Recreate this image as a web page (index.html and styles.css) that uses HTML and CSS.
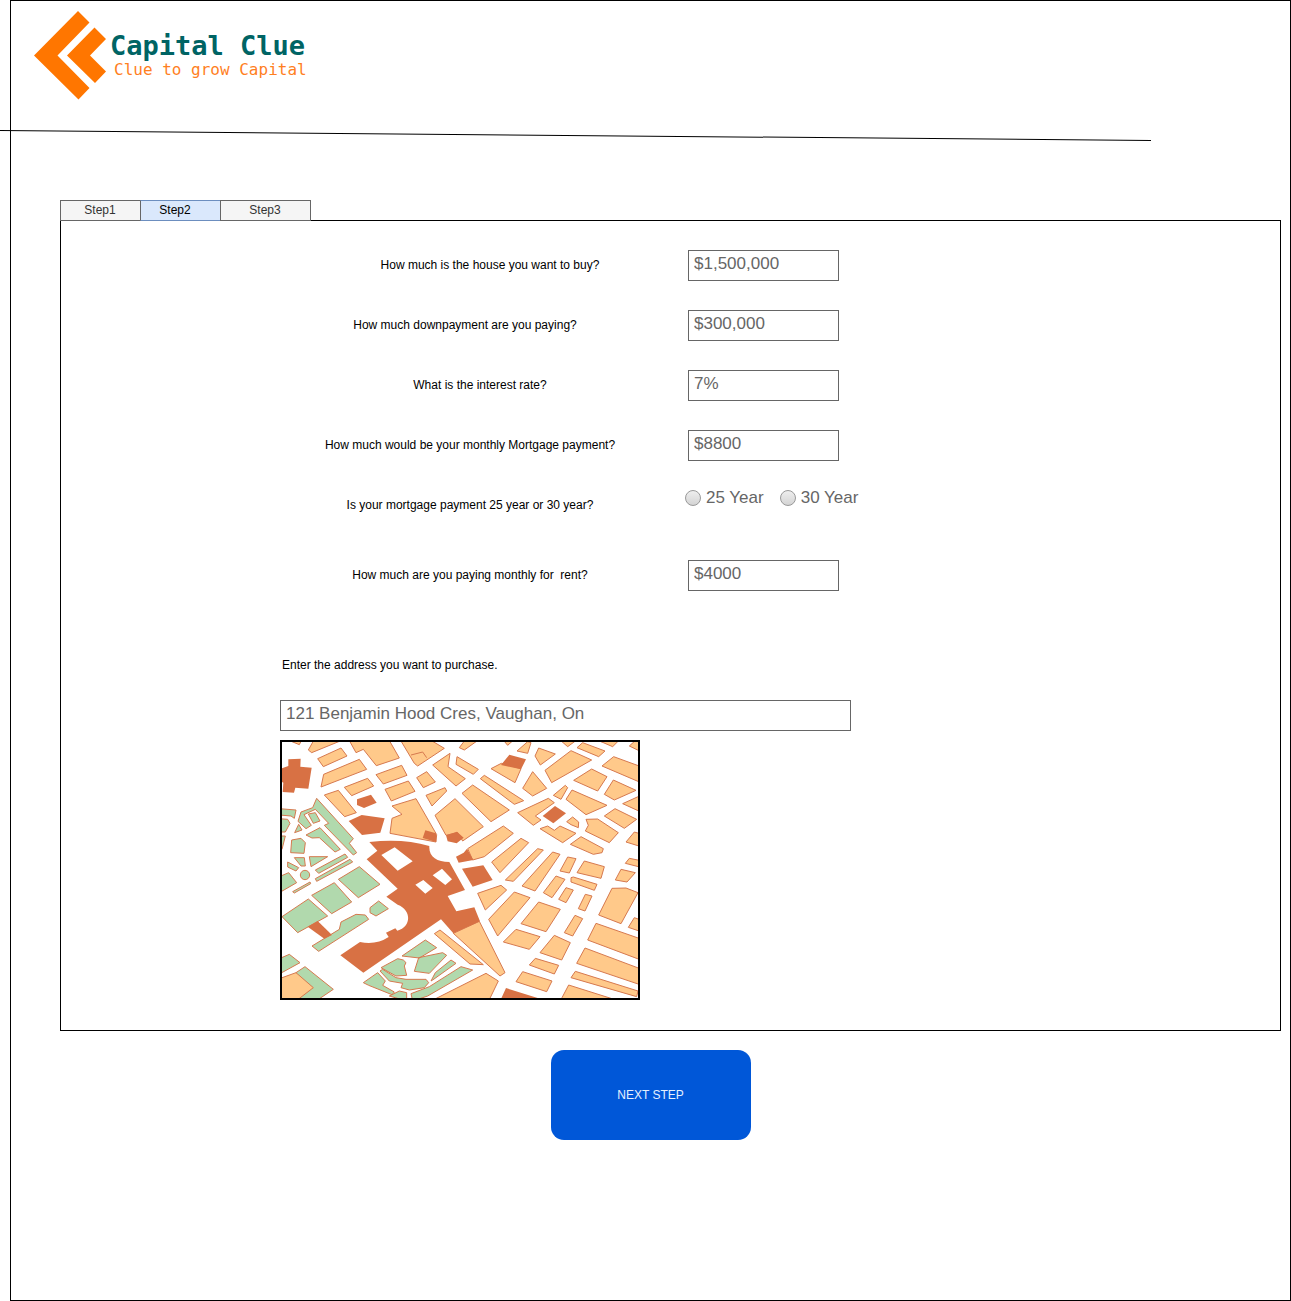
FILE: index.html
```html
<!DOCTYPE html>
<html lang="en">
<head>
<meta charset="utf-8">
<meta name="viewport" content="width=device-width, initial-scale=1">
<title>Capital Clue</title>
<link rel="stylesheet" href="styles.css">
</head>
<body>
<div class="frame">
  <header class="header">
    <a class="brand" href="#">
      <svg class="brand-mark" viewBox="0 0 72 90" aria-hidden="true">
        <path d="M44 0 55.500 11.500 23.500 44.500 55.500 77 44.500 88.500 0 44.500Z"/>
        <path d="M60.500 16.500 72 28 56 44.500 72 60.500 61 72 33 44.500Z"/>
      </svg>
      <span class="brand-text">
        <span class="brand-name">Capital Clue</span>
        <span class="brand-tag">Clue to grow Capital</span>
      </span>
    </a>
    <svg class="rule" viewBox="0 0 1150 12" preserveAspectRatio="none" aria-hidden="true"><path d="M0 .5 1150 10.500"/></svg>
  </header>

  <main class="main">
    <nav class="tabs" aria-label="Steps">
      <button class="tab" type="button">Step1</button>
      <button class="tab tab-active" type="button" aria-current="step">Step2</button>
      <button class="tab tab-wide" type="button">Step3</button>
    </nav>

    <form class="form" id="mortgage">
      <div class="fields">
        <div class="field">
          <label class="question indent-large" for="price">How much is the house you want to buy?</label>
          <input class="box" id="price" type="text" value="$1,500,000">
        </div>
        <div class="field">
          <label class="question outdent" for="down">How much downpayment are you paying?</label>
          <input class="box" id="down" type="text" value="$300,000">
        </div>
        <div class="field">
          <label class="question indent" for="rate">What is the interest rate?</label>
          <input class="box" id="rate" type="text" value="7%">
        </div>
        <div class="field">
          <label class="question" for="payment">How much would be your monthly Mortgage payment?</label>
          <input class="box" id="payment" type="text" value="$8800">
        </div>
        <div class="field" role="radiogroup" aria-labelledby="term-label">
          <span class="question" id="term-label">Is your mortgage payment 25 year or 30 year?</span>
          <div class="choices">
            <label class="choice"><input class="radio" type="radio" name="term" value="25">25 Year</label>
            <label class="choice"><input class="radio" type="radio" name="term" value="30">30 Year</label>
          </div>
        </div>
        <div class="field field-spaced">
          <label class="question keep-spaces" for="rent">How much are you paying monthly for  rent?</label>
          <input class="box" id="rent" type="text" value="$4000">
        </div>
      </div>

      <div class="address">
        <label class="address-label" for="address">Enter the address you want to purchase.</label>
        <input class="box box-wide" id="address" type="text" value="121 Benjamin Hood Cres, Vaughan, On">
        <svg class="map" viewBox="6 6 1068 768" role="img" aria-label="Map of the neighbourhood">
          <!-- north west -->
          <g transform="translate(-12 -12)">
            <path class="lot" d="M48 10 48 17 70 26 78 10ZM115 10 97 42 107 50 205 10ZM125 68 195 36 213 60 142 92ZM143 115 250 70 272 100 135 153ZM145 177 187 163 241 230 206 242ZM205 154 275 127 293 150 227 179ZM218 10 240 50 262 40 301 89 370 66 338 10ZM300 116 377 88 393 118 322 144ZM327 160 397 135 417 166 346 195Z"/>
            <path class="park" d="M10 218 60 222 55 247 45 240 10 237ZM10 248 35 250 42 262 28 288 10 288ZM10 300 28 300 18 340 10 345ZM56 290 68 265 78 282ZM122 187 232 308 220 322 242 350 232 357 145 268 158 262 118 220 84 236 106 268 90 278 66 256 75 228 110 215ZM97 234 118 230 132 255 112 262ZM90 297 132 275 193 340 177 348 130 305 108 306ZM47 312 75 307 88 320 84 352 44 350ZM55 365 85 365 88 390 75 390ZM100 362 155 362 105 392ZM35 378 68 395 60 405 35 393ZM118 402 207 354 215 364 128 412ZM118 428 222 370 230 378 122 436Z"/>
            <path class="hall" d="M37 70 74 68 73 92 107 95 97 158 58 155 54 170 20 168 22 140 10 135 10 100 37 90ZM243 190 285 176 302 200 264 216 243 207ZM218 255 257 237 326 247 313 290 258 297Z"/>
          </g>
          <!-- north -->
          <g transform="translate(348 -12)">
            <path class="lot" d="M-12 210 60 188 122 296 120 318-18 292-12 247 18 235ZM12 10 100 10 145 37 65 90 55 82ZM45 57 80 48 92 65M62 125 92 107 118 138 82 155ZM90 178 147 155 152 165 108 210ZM110 87 162 52 156 92 208 128 180 150ZM183 62 247 100 232 115 180 85ZM253 128 265 118 383 194 355 205ZM198 172 230 147 340 222 285 257ZM117 238 177 188 262 272 200 315 185 290 150 298ZM190 35 205 15 250 10 205 42ZM320 10 335 28 355 10ZM285 98 316 82 375 98 357 140ZM215 338 322 270 352 292 265 362 230 372ZM287 378 375 307 398 320 312 410Z"/>
            <path class="hall" d="M80 306 88 283 120 292 120 318ZM150 298 183 287 203 305 182 322 155 316ZM180 362 203 350 213 338 232 372 188 380ZM315 87 340 56 390 70 375 100Z"/>
          </g>
          <!-- north east -->
          <g transform="translate(708 -12)">
            <path class="lot" d="M3 45 35 17 45 20 35 52ZM57 60 68 36 118 54 73 87ZM130 10 155 32 185 10ZM183 35 200 20 267 45 248 62ZM87 103 165 44 227 72 107 140ZM173 133 227 99 273 122 245 165ZM258 90 293 62 375 92 375 140ZM265 175 292 132 360 163 295 192ZM150 190 168 162 273 208 210 236ZM112 178 148 148 155 155 135 190ZM20 157 50 107 92 157 50 180ZM5 230 97 187 115 200 58 240 75 252 52 268ZM72 278 95 270 115 283 132 270 180 292 140 320ZM152 257 170 243 188 258 187 275 165 266ZM210 250 245 249 307 290 280 320 208 285 217 268ZM163 325 195 302 262 338 258 350 232 355ZM265 240 297 218 362 250 325 277ZM320 203 375 178 375 228ZM330 318 355 288 375 294 375 332ZM328 382 340 367 375 374 375 394ZM340 30 362 10 375 10 375 47ZM255 17 290 32 312 10ZM-32 432 65 338 82 342-8 436ZM18 450 110 348 132 355 57 465ZM132 405 155 363 180 368 160 411ZM183 410 205 375 265 392 255 427Z"/>
            <path class="hall" d="M80 240 117 210 150 232 112 262Z"/>
          </g>
          <!-- south west -->
          <g transform="translate(-12 378)">
            <path class="park" d="M187 40 250 2 312 55 247 95ZM50 77 102 48 104 53 55 81ZM10 32 38 20 62 50 10 80ZM107 88 175 50 227 108 167 143ZM18 152 97 99 155 150 65 200ZM108 240 190 190 195 168 240 145 268 147 278 160 128 256ZM282 125 308 105 337 128 300 150 282 140ZM10 278 40 265 72 290 10 324ZM60 320 87 302 172 370 120 405 60 405ZM262 350 305 320 328 345 320 358 355 378 348 386 278 358Z"/>
            <circle class="park" cx="87" cy="27" r="14"/>
            <path class="lot" d="M10 338 60 320 112 365 60 405 10 405Z"/>
            <path class="hall" d="M95 182 125 165 168 207 145 218Z"/>
          </g>
          <!-- south, with the main hall and its courtyards -->
          <g transform="translate(348 378)">
            <path class="lot" d="M245 82 315 58 332 72 268 132ZM278 160 355 78 402 95 305 210ZM322 228 360 190 432 212 400 250ZM172 202 250 166 327 320 312 330ZM115 203 132 192 262 296 222 294ZM105 405 270 322 307 345 278 405Z"/>
            <path class="hall" fill-rule="evenodd" d="M-80-72Q20-84 100-60C98-28 122-12 160-12L207 72 155 90 181 136 235 124 252 166 172 202 135 160-98 320-167 268-108 228Q-60 238-22 213L-30 200-2 187 4 194C46 182 48 132 5 116L-29 92 5 68-88-20-56-46ZM-44-33-4-56 50-14 5 14ZM58 56 82 42 110 66 88 83ZM110 28 138 8 168 40 148 57ZM198 8 262-2 290 42 230 62ZM330 366 425 396 425 410 310 410Z"/>
            <path class="park" d="M18 270 88 222 122 245 70 276ZM55 316 68 275 140 260 152 268 100 322ZM105 345 118 320 165 282 180 292 110 342ZM45 383 100 362 195 302 230 312 95 390 50 405ZM-45 305 5 278 22 282 30 290 25 300 32 328 0 330ZM-48 315-40 310 0 335 30 340 90 340 98 350 85 365 40 372 15 365 20 352-20 345ZM-20 390 10 375 32 380 32 405Z"/>
          </g>
          <!-- south east -->
          <g transform="translate(708 378)">
            <path class="lot" d="M165 35 172 33 243 55 235 73 165 48ZM82 80 120 30 147 40 108 95ZM128 100 150 65 172 72 150 110ZM187 128 208 85 228 90 207 135ZM145 200 177 148 200 158 170 210ZM15 173 68 108 133 130 90 197ZM72 260 115 208 163 230 137 282ZM40 297 58 277 128 298 115 324ZM0 347 20 317 108 345 92 377ZM248 147 288 67 330 66 366 80 315 173ZM298 42 315 10 358 20 333 48ZM337 184 355 155 375 162 375 197ZM215 222 240 172 375 219 375 282ZM182 292 207 246 375 309 375 357ZM165 335 178 316 366 375 362 392ZM138 395 158 357 310 405 138 405Z"/>
          </g>
        </svg>
      </div>
    </form>
    <button class="next" type="submit" form="mortgage">NEXT STEP</button>
  </main>
</div>
</body>
</html>
```
FILE: styles.css
```css
* {
  box-sizing: border-box;
}

body {
  margin: 0;
  background: #fff;
  color: #000;
  font: 12px/16px "Liberation Sans", Arial, sans-serif;
}

button,
input {
  font: inherit;
}

.frame {
  margin-left: 10px;
  min-height: 100vh;
  border: 1px solid #000;
}

.header {
  position: relative;
  padding: 10px 23px;
  height: 199px;
}

.brand {
  display: inline-flex;
  gap: 4px;
  text-decoration: none;
}

.brand-mark {
  width: 72px;
  height: 90px;
  fill: #ff7600;
}

.brand-text {
  display: flex;
  flex-direction: column;
  padding-top: 20px;
}

.brand-name {
  color: #006464;
  font: bold 27px/30px "DejaVu Sans Mono", monospace;
}

.brand-tag {
  padding-left: 4px;
  color: #ff7f1f;
  font: 16px/18px "DejaVu Sans Mono", monospace;
}

/* The sloping rule crosses the frame's left edge. */
.rule {
  position: absolute;
  top: 129px;
  left: -11px;
  width: 90%;
  height: 12px;
  fill: none;
  stroke: #000;
}

.main {
  display: flex;
  flex-direction: column;
  padding: 0 9px 0 49px;
}

.tabs {
  position: relative;
  display: flex;
}

.tab {
  width: 80px;
  height: 21px;
  padding: 0 1px 2px 0;
  border: 1px solid #666;
  border-right: 0;
  background: #f5f5f5;
  color: #333;
  line-height: 16px;
}

.tab-active {
  padding-right: 11px;
  border-color: #6c8ebf;
  border-left-color: #666;
  background: #dae8fc;
  color: #000;
}

.tab-wide {
  width: 91px;
  border-right: 1px solid #666;
}

.form {
  margin-top: -1px;
  padding: 29px 20px 30px 219px;
  border: 1px solid #000;
}

.fields {
  display: flex;
  flex-direction: column;
  gap: 29px;
}

.field {
  display: grid;
  grid-template-columns: 380px 1fr;
  column-gap: 25px;
  align-items: center;
  min-height: 31px;
}

.field-spaced {
  margin-top: 10px;
}

.question {
  padding-bottom: 2px;
  text-align: center;
}

.indent {
  padding-left: 20px;
}

.indent-large {
  padding-left: 40px;
}

.outdent {
  padding-right: 10px;
}

.keep-spaces {
  white-space: pre;
}

.box {
  width: 151px;
  height: 31px;
  margin: 0 0 0 3px;
  padding: 0 5px 4px;
  border: 1px solid #666;
  background: #fff;
  color: #666;
  font-size: 17px;
}

.box-wide {
  width: 571px;
  max-width: 100%;
  margin: 0;
}

.choices {
  display: flex;
  align-self: start;
  gap: 16px;
}

.choice {
  display: flex;
  align-items: center;
  gap: 5px;
  color: #666;
  font-size: 17px;
}

.radio {
  appearance: none;
  width: 16px;
  height: 16px;
  margin: 0;
  border: 1px solid #999;
  border-radius: 50%;
  background: linear-gradient(#eee, #d4d4d4);
}

.radio:checked {
  background: radial-gradient(#555 35%, #e2e2e2 40%);
}

.address {
  display: flex;
  flex-direction: column;
  align-items: flex-start;
  padding-top: 66px;
}

.address-label {
  padding: 0 2px;
  margin-bottom: 27px;
}

.map {
  width: 360px;
  height: 260px;
  margin-top: 9px;
  border: 2px solid #000;
}

.lot,
.park {
  stroke: #d6794f;
  stroke-width: 3;
}

.lot {
  fill: #ffc98a;
}

.park {
  fill: #b1d9ad;
}

.hall {
  fill: #d87144;
}

/* The right margin centres the button on the frame rather than on the panel. */
.next {
  align-self: center;
  width: 200px;
  height: 90px;
  margin: 19px 40px 20px 0;
  border: 0;
  border-radius: 13px;
  background: #0057d8;
  color: #e4f0ff;
}
```
